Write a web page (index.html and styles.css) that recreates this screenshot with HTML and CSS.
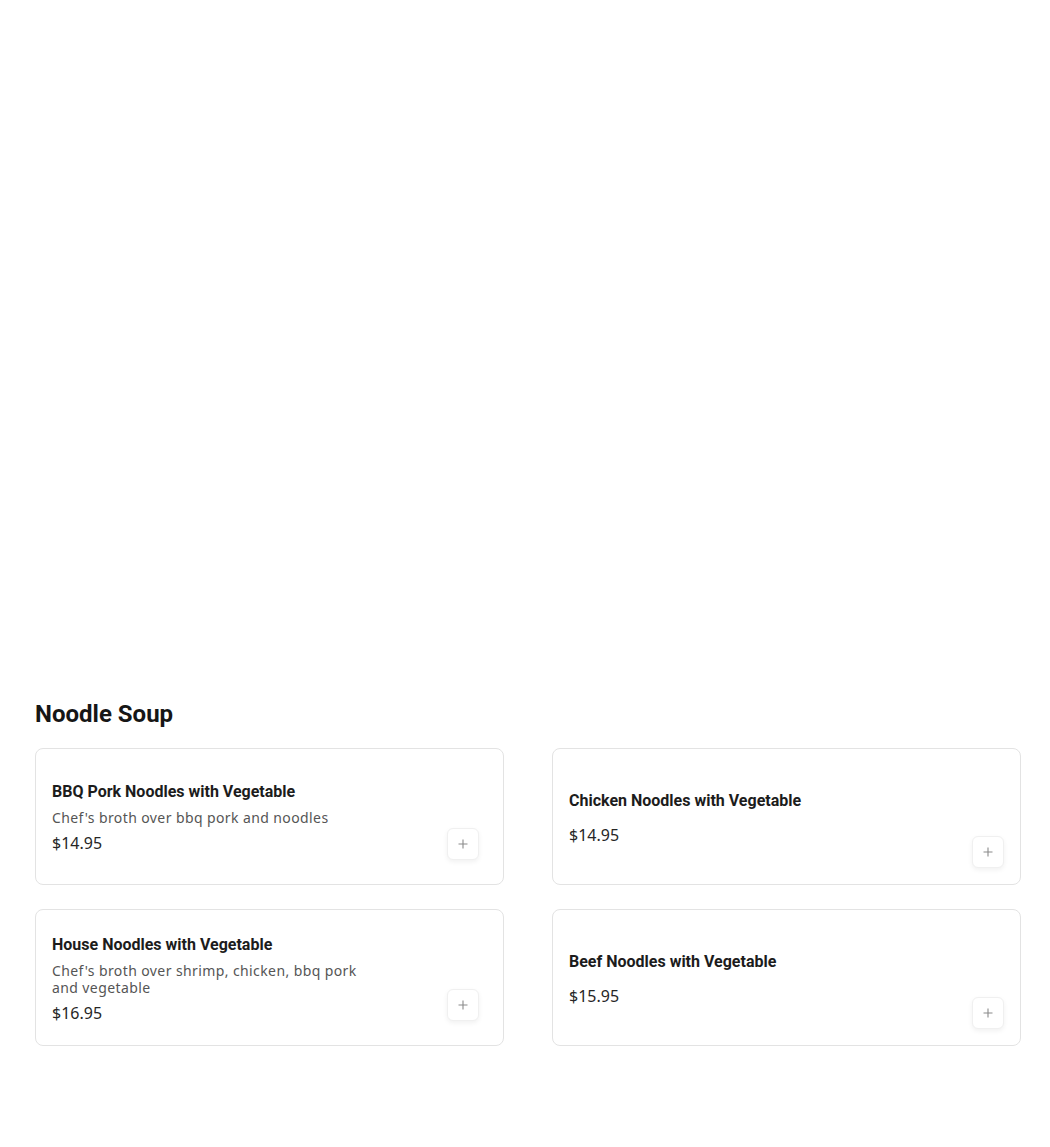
FILE: index.html
```html
<!DOCTYPE html>
<html lang="en">
<head>
    <meta charset="UTF-8">
    <title>Noodle Soup</title>
    <link rel="stylesheet" href="styles.css">
</head>
<body>

<!-- menu section -->
<div class="menu-section">
    <h2 class="section-title">Noodle Soup</h2>

    <div class="item-grid">
        <div class="item-card">
            <div class="item-body">
                <h3 class="item-name">BBQ Pork Noodles with Vegetable</h3>
                <p class="item-desc">Chef's broth over bbq pork and noodles</p>
                <p class="item-price">$14.95</p>
            </div>
            <button class="add-btn add-btn-inset" aria-label="Add">
                <svg viewBox="0 0 10 10" width="10" height="10"><path d="M5 0.5v9M0.5 5h9" stroke="#8a8a8a" stroke-width="1.1" fill="none"/></svg>
            </button>
        </div>

        <div class="item-card">
            <div class="item-body">
                <h3 class="item-name">Chicken Noodles with Vegetable</h3>
                <p class="item-desc"></p>
                <p class="item-price">$14.95</p>
            </div>
            <button class="add-btn" aria-label="Add">
                <svg viewBox="0 0 10 10" width="10" height="10"><path d="M5 0.5v9M0.5 5h9" stroke="#8a8a8a" stroke-width="1.1" fill="none"/></svg>
            </button>
        </div>

        <div class="item-card">
            <div class="item-body">
                <h3 class="item-name">House Noodles with Vegetable</h3>
                <p class="item-desc">Chef's broth over shrimp, chicken, bbq pork and vegetable</p>
                <p class="item-price">$16.95</p>
            </div>
            <button class="add-btn add-btn-inset" aria-label="Add">
                <svg viewBox="0 0 10 10" width="10" height="10"><path d="M5 0.5v9M0.5 5h9" stroke="#8a8a8a" stroke-width="1.1" fill="none"/></svg>
            </button>
        </div>

        <div class="item-card">
            <div class="item-body">
                <h3 class="item-name">Beef Noodles with Vegetable</h3>
                <p class="item-desc"></p>
                <p class="item-price">$15.95</p>
            </div>
            <button class="add-btn" aria-label="Add">
                <svg viewBox="0 0 10 10" width="10" height="10"><path d="M5 0.5v9M0.5 5h9" stroke="#8a8a8a" stroke-width="1.1" fill="none"/></svg>
            </button>
        </div>
    </div>
</div>

</body>
</html>
```

FILE: styles.css
```css
body {
    font-family: Roboto, "Liberation Sans", sans-serif;
    background-color: #ffffff;
    color: #1a1a1a;
    margin: 0;
    padding: 0;
}

.menu-section {
    padding: 698px 29px 0 35px;
}

.section-title {
    margin: 0 0 18px;
    font-size: 24px;
    line-height: 32px;
    font-weight: 700;
    color: #161616;
}

.item-grid {
    display: grid;
    grid-template-columns: 1fr 1fr;
    column-gap: 48px;
    row-gap: 24px;
}

.item-card {
    display: flex;
    box-sizing: border-box;
    min-height: 137px;
    padding: 16px;
    border: 1px solid #e3e3e3;
    border-radius: 8px;
    background-color: #ffffff;
}

.item-body {
    flex: 1;
    display: flex;
    flex-direction: column;
    justify-content: center;
    gap: 7px;
    padding-top: 2px;
}

.item-name {
    margin: 0;
    font-size: 16px;
    line-height: 20px;
    font-weight: 700;
    color: #1c1c1c;
}

.item-desc {
    margin: 0;
    max-width: 312px;
    font-family: "Noto Sans", "Open Sans", sans-serif;
    font-size: 14px;
    line-height: 17px;
    letter-spacing: 0.4px;
    color: #555555;
}

.item-price {
    margin: 0;
    font-family: "Noto Sans", "Open Sans", sans-serif;
    font-size: 16px;
    line-height: 20px;
    color: #262626;
}

.add-btn {
    align-self: flex-end;
    display: flex;
    align-items: center;
    justify-content: center;
    width: 32px;
    height: 32px;
    padding: 0;
    border: 1px solid #f0f0f0;
    border-radius: 6px;
    background-color: #ffffff;
    box-shadow: 0 2px 5px rgba(0,0,0,0.06);
    cursor: pointer;
}

.add-btn-inset {
    margin: 0 8px 8px 0;
}
```
